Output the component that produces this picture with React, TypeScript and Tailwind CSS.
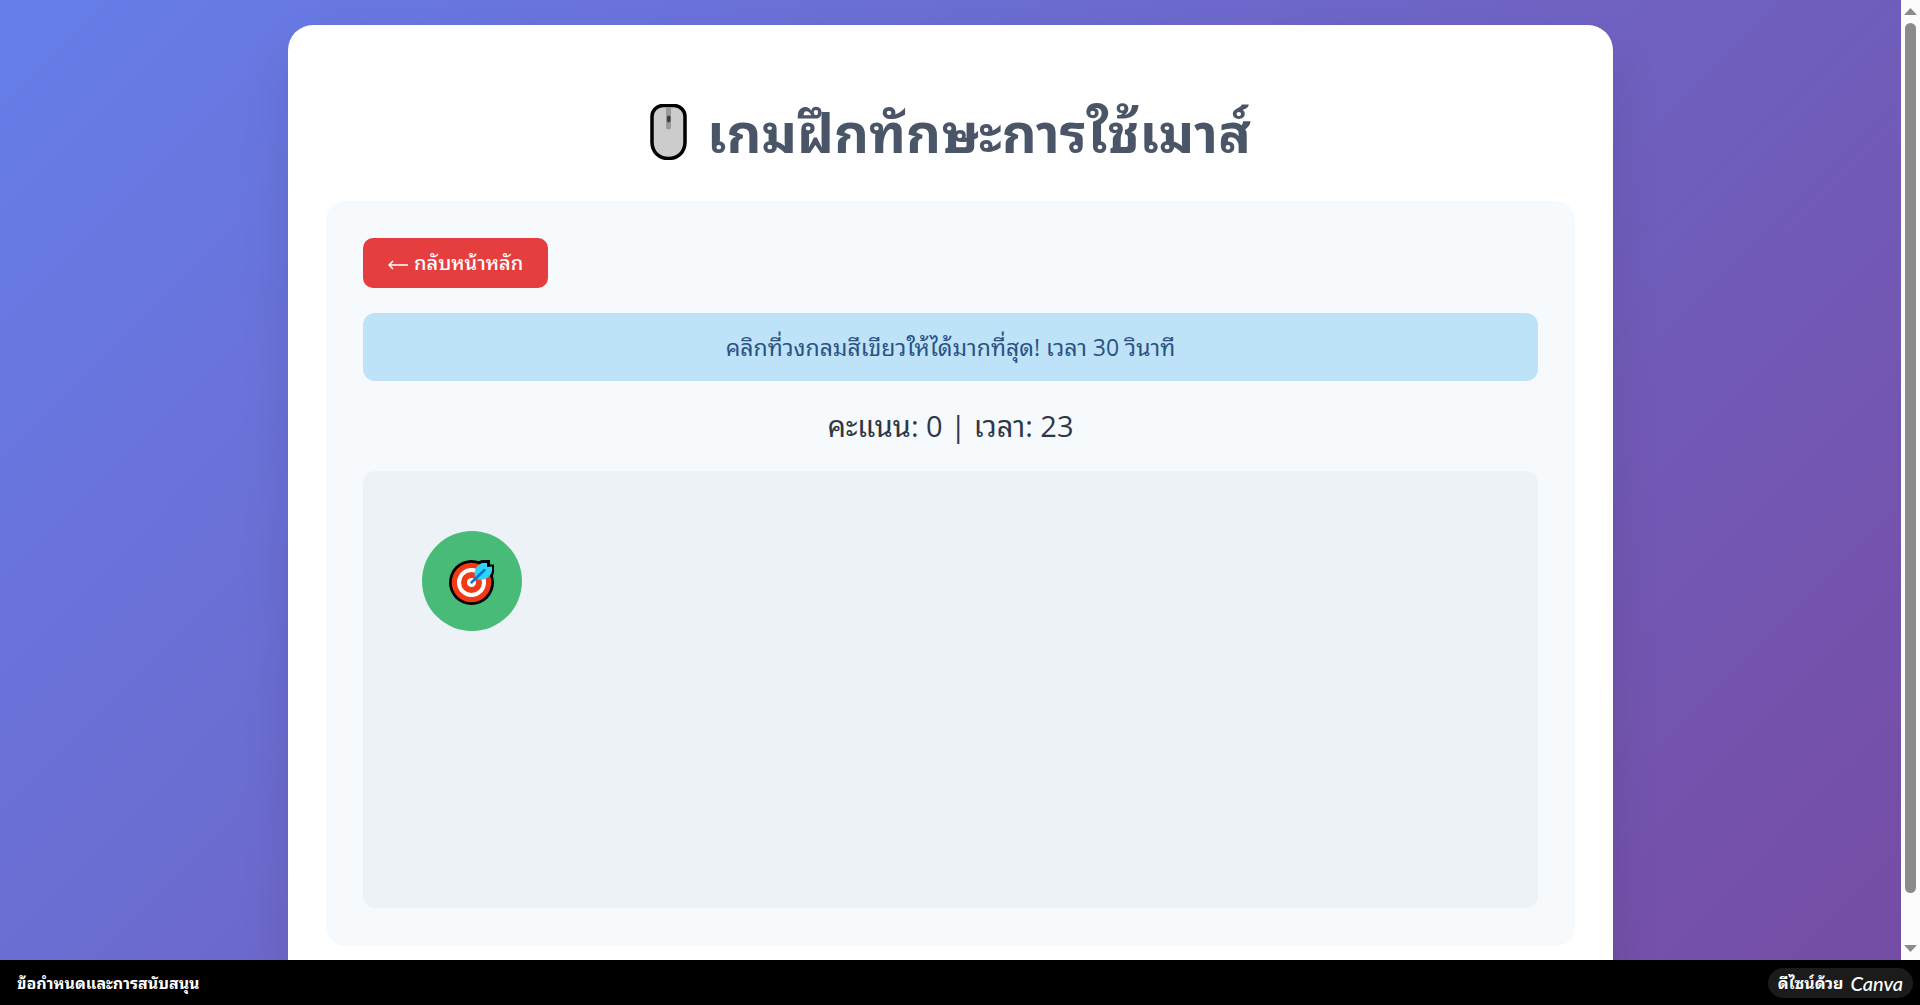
import React from "react";

function MouseIcon() {
  return (
    <svg viewBox="0 0 37 56" className="h-14 w-[37px] shrink-0" role="img" aria-label="เมาส์">
      <path d="M13 1.500h11A11 11 0 0 1 35 12.500V38c0 10-7 16.500-16.500 16.500S2 48 2 38V12.500A11 11 0 0 1 13 1.500Z" fill="#cccccc" stroke="#000" strokeWidth="3.500" />
      <path d="M16 3.500h5v19.500a2.500 2.500 0 0 1-5 0Z" fill="#999999" />
      <rect x="17" y="11.500" width="3.500" height="7" rx="1.700" fill="#3f3f3f" />
    </svg>
  );
}

function ArrowLeftIcon() {
  return (
    <svg viewBox="0 0 20 10" className="mt-1 h-[10px] w-5" fill="none" stroke="currentColor" strokeWidth="1.500" aria-hidden="true">
      <path d="M1 5h19M5 1 1 5l4 4" />
    </svg>
  );
}

function TargetIcon() {
  return (
    <svg viewBox="0 0 46 46" className="mt-[3px] h-[46px] w-[46px]" aria-hidden="true">
      <circle cx="22.500" cy="22.500" r="22.500" fill="#000" />
      <path d="M27 2l6-2h8v4.500H45v8l-3 9Z" fill="#000" />
      <circle cx="22.500" cy="22.500" r="19.800" fill="#f03a17" />
      <circle cx="22.500" cy="22.500" r="14.500" fill="#fff" />
      <circle cx="22.500" cy="22.500" r="10.500" fill="#f03a17" />
      <circle cx="22.500" cy="22.500" r="4.500" fill="#fff" />
      <path d="M26.500 18.500c-2-5.500-.5-10.500 3-13.500L33 3h5v4l5-.5V11c-1.500 6.500-8 10-14.500 8.500Z" fill="#31d2f7" />
      <path d="M22.500 22.500 35.500 10" stroke="#0078d4" strokeWidth="2.500" strokeLinecap="round" />
    </svg>
  );
}

function ScrollTrack() {
  return (
    <div className="flex w-[19px] shrink-0 flex-col items-center bg-[#fcfcfc] py-2" aria-hidden="true">
      <svg viewBox="0 0 13 7" className="h-[7px] w-[13px]"><path d="M0 7 6.500 0 13 7Z" fill="#8b8b8b" /></svg>
      <div className="mt-2 w-[11px] flex-1 rounded-full bg-[#8b8b8b]" />
      <svg viewBox="0 0 13 7" className="mt-[52px] h-[7px] w-[13px]"><path d="M0 0h13L6.500 7Z" fill="#8b8b8b" /></svg>
    </div>
  );
}

export default function App() {
  return (
    <div className="flex h-screen flex-col overflow-hidden bg-black font-['Open_Sans','Noto_Sans_Thai_Looped',sans-serif]">
      <div className="flex min-h-0 flex-1">
        <main className="min-w-0 flex-1 overflow-hidden">
          <div className="bg-[linear-gradient(135deg,#667eea_0%,#764ba2_100%)] px-6 py-[25px]">
            <div className="mx-auto max-w-[1325px] rounded-[25px] bg-white px-[38px] pt-[77px] pb-[38px] shadow-[0_25px_50px_rgba(0,0,0,0.1)]">
              <h1 className="mb-[39px] flex h-[60px] items-center justify-center gap-5 text-[54px] leading-[60px] font-bold text-[#4a5568]">
                <MouseIcon />
                <span>เกมฝึกทักษะการใช้เมาส์</span>
              </h1>

              <section className="rounded-[19px] bg-[#f7fafc] px-[37px] pt-[37px] pb-[38px]">
                <button type="button" className="flex h-[50px] items-center gap-[6px] rounded-[10px] bg-[#e53e3e] px-[25px] text-xl font-medium text-white">
                  <ArrowLeftIcon />
                  กลับหน้าหลัก
                </button>
                <p className="mt-[25px] flex h-[68px] items-center justify-center rounded-xl bg-[#bee3f8] text-[23px] text-[#2c5282]">
                  คลิกที่วงกลมสีเขียวให้ได้มากที่สุด! เวลา 30 วินาที
                </p>
                <p className="my-[25px] h-10 text-center text-[29px] leading-10 text-[#2d3748]">
                  คะแนน: 0 | เวลา: 23
                </p>
                <div className="relative h-[437px] rounded-xl bg-[#edf2f7]">
                  <button type="button" aria-label="เป้าหมาย" className="absolute top-[60px] left-[59px] flex size-[100px] items-center justify-center rounded-full bg-[#48bb78]">
                    <TargetIcon />
                  </button>
                </div>
              </section>
            </div>
          </div>
        </main>
        <ScrollTrack />
      </div>

      <footer className="flex h-[45px] shrink-0 items-center justify-between bg-black pr-[7px] pl-[17px] text-base font-bold text-white">
        <a href="#terms">ข้อกำหนดและการสนับสนุน</a>
        <a href="#canva" className="flex h-[30px] items-center gap-[7px] rounded-full bg-[#1b1b1b] px-[10px]">
          <span>ดีไซน์ด้วย</span>
          <span className="font-['Lato',cursive] text-xl font-medium italic">Canva</span>
        </a>
      </footer>
    </div>
  );
}
